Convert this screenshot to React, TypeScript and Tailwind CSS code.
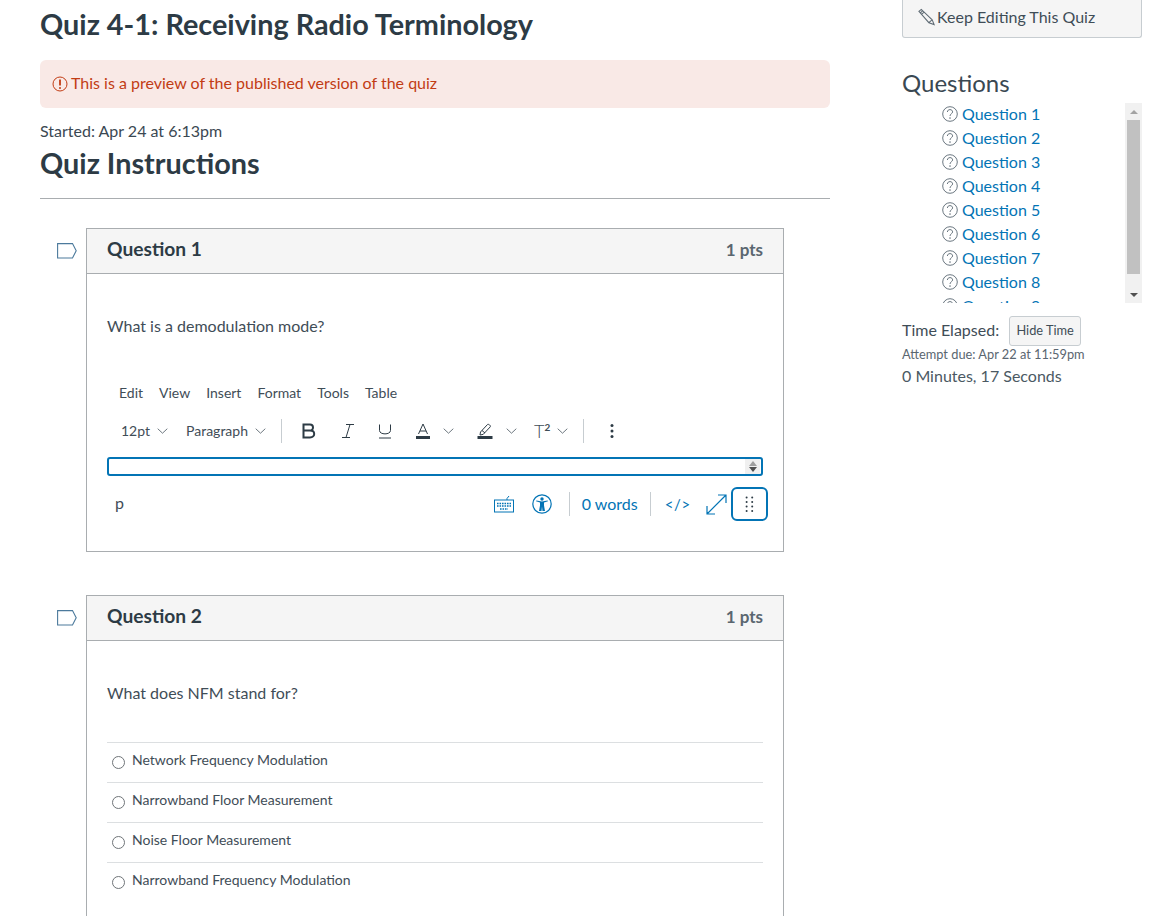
import React from "react";

const Chevron = ({ className = "" }: { className?: string }) => (
  <svg width="11" height="6" viewBox="0 0 11 6" fill="none" stroke="#5c6870" strokeWidth="0.9" className={className}>
    <path d="M0.7 0.7 L5.5 5.2 L10.3 0.7" />
  </svg>
);

const Flag = () => (
  <svg width="20" height="16" viewBox="0 0 20 16" fill="none" stroke="#4c7a9c" strokeWidth="1.1" className="shrink-0">
    <path d="M0.6 0.6 H15.5 L19.2 7.7 L15.5 15 H0.6 Z" />
  </svg>
);

const QMark = () => (
  <svg width="16" height="16" viewBox="0 0 16 16" fill="none" className="shrink-0">
    <circle cx="8" cy="8" r="7.3" stroke="#6b7780" strokeWidth="1" />
    <path d="M5.4 6 C5.4 4.4 6.6 3.6 8 3.6 C9.5 3.6 10.6 4.6 10.6 5.9 C10.6 7.6 8 7.9 8 10" stroke="#6b7780" strokeWidth="1" />
    <circle cx="8" cy="12.1" r="0.8" fill="#6b7780" />
  </svg>
);

const Card = ({ title, className = "", children }: { title: string; className?: string; children: React.ReactNode }) => (
  <div className={`flex items-start ${className}`}>
    <div className="w-[46px] shrink-0 pt-[15px] pl-[17px]">
      <Flag />
    </div>
    <div className="flex-1 border border-[#a9adb0] flex flex-col">
      <div className="h-[45px] shrink-0 bg-[#f5f5f5] border-b border-[#a9adb0] flex items-center justify-between pl-5 pr-5">
        <span className="text-[19.2px] font-bold text-[#2d3b45] pb-[4px]">{title}</span>
        <span className="text-[17px] font-bold text-[#5a6670] pb-[3px]">1 pts</span>
      </div>
      {children}
    </div>
  </div>
);

const Answer = ({ text }: { text: string }) => (
  <div className="h-[40px] border-t border-[#dcdfe1] flex items-center pl-[5px] gap-[7px]">
    <span className="w-[13px] h-[13px] rounded-full border border-[#6f7478] bg-white shrink-0" />
    <span className="text-[14px] text-[#3f4d57] pb-[6px]">{text}</span>
  </div>
);

export default function App() {
  const questions = [1, 2, 3, 4, 5, 6, 7, 8, 9];
  return (
    <div className="w-[1150px] h-[916px] overflow-hidden bg-white flex font-['Lato','Liberation_Sans',sans-serif] text-[#2d3b45]">
      <main className="w-[790px] ml-10 shrink-0">
        <h1 className="h-[48px] leading-[48px] text-[28.8px] font-bold whitespace-nowrap">
          Quiz 4-1: Receiving Radio Terminology
        </h1>
        <div className="mt-[12px] h-[48px] rounded-[6px] bg-[#f9e9e6] flex items-center pl-[12px] gap-[3px] text-[16px] text-[#c23c14]">
          <svg width="16" height="16" viewBox="0 0 16 16" fill="none" className="shrink-0">
            <circle cx="8" cy="8" r="7" stroke="#c23c14" strokeWidth="1" />
            <path d="M8 3.6 V9.6" stroke="#c23c14" strokeWidth="1.8" />
            <circle cx="8" cy="12" r="1" fill="#c23c14" />
          </svg>
          <span className="pb-[2px]">This is a preview of the published version of the quiz</span>
        </div>
        <div className="mt-[13px] h-[20px] leading-[20px] text-[16px] text-[#3b4852]">Started: Apr 24 at 6:13pm</div>
        <h2 className="mt-[2px] h-[40px] leading-[40px] text-[28.8px] font-bold">Quiz Instructions</h2>
        <div className="mt-[15px] h-px bg-[#a9adb0]" />

        <Card title="Question 1" className="mt-[29px] w-[744px]">
          <div className="h-[277px] flex flex-col px-5">
            <div className="mt-[42px] h-[20px] leading-[20px] text-[16px] text-[#3f4d57]">What is a demodulation mode?</div>
            <div className="mt-[46px] h-[20px] flex items-center gap-[16px] pl-3 text-[14px] text-[#3f4d57]">
              <span>Edit</span>
              <span>View</span>
              <span>Insert</span>
              <span>Format</span>
              <span>Tools</span>
              <span>Table</span>
            </div>
            <div className="mt-[17px] h-[24px] flex items-center pl-[14px] text-[14px] text-[#3f4d57]">
              <span className="pb-[2px]">12pt</span>
              <Chevron className="ml-[7px]" />
              <span className="ml-[18px] pb-[2px]">Paragraph</span>
              <Chevron className="ml-[7px]" />
              <span className="ml-[15px] w-px h-[24px] bg-[#c7cdd1]" />
              <svg width="16" height="16" viewBox="0 0 16 16" fill="none" stroke="#2d3b45" strokeWidth="2" className="ml-[19px]">
                <path d="M2.5 1.6 H9 C13 1.6 13 7.6 9 7.6 H2.5 M9 7.6 C14.6 7.6 14.6 14.4 9 14.4 H2.5 M2.5 0.6 V15.4" />
              </svg>
              <svg width="16" height="16" viewBox="0 0 16 16" fill="none" stroke="#2d3b45" strokeWidth="1" className="ml-[23px]">
                <path d="M6 1.5 H14 M2 14.5 H10 M10 1.5 L6 14.5" />
              </svg>
              <svg width="16" height="16" viewBox="0 0 16 16" fill="none" stroke="#2d3b45" strokeWidth="1" className="ml-[21px]">
                <path d="M2.5 1.5 V7.5 C2.5 12 13.5 12 13.5 7.5 V1.5 M2 15 H14" />
              </svg>
              <svg width="16" height="16" viewBox="0 0 16 16" fill="none" stroke="#2d3b45" strokeWidth="1" className="ml-[22px]">
                <path d="M3.5 11 L8 1 L12.5 11 M5 8 H11" />
                <rect x="1" y="13" width="14" height="3" fill="#2d3b45" stroke="none" />
              </svg>
              <Chevron className="ml-[12px]" />
              <svg width="16" height="16" viewBox="0 0 16 16" fill="none" stroke="#2d3b45" strokeWidth="1" className="ml-[23px]">
                <path d="M3.5 9 L10.5 1.5 C11.5 0.6 14.2 2.8 13.2 3.9 L6.2 11.4 L3 12 Z M5 7.5 L8 10" />
                <rect x="0.5" y="13" width="15" height="3" fill="#2d3b45" stroke="none" />
              </svg>
              <Chevron className="ml-[13px]" />
              <span className="ml-[17px] text-[18px] leading-none font-light">T</span>
              <span className="text-[10px] font-bold leading-none mb-[8px]">2</span>
              <Chevron className="ml-[7px]" />
              <span className="ml-[15px] w-px h-[24px] bg-[#c7cdd1]" />
              <svg width="4" height="16" viewBox="0 0 4 16" fill="#2d3b45" className="ml-[26px]">
                <circle cx="2" cy="2.5" r="1.5" />
                <circle cx="2" cy="8" r="1.5" />
                <circle cx="2" cy="13.5" r="1.5" />
              </svg>
            </div>
            <div className="mt-[14px] h-[19px] border-2 border-[#0374b5] rounded-[3px] flex justify-end items-center pr-[1px]">
              <div className="w-[15px] h-[15px] bg-[#f0f0f0] flex flex-col items-center justify-center gap-[1px]">
                <span className="w-0 h-0 border-x-[4px] border-x-transparent border-b-[5px] border-b-[#a0a0a0]" />
                <span className="w-0 h-0 border-x-[4px] border-x-transparent border-t-[5px] border-t-[#505050]" />
              </div>
            </div>
            <div className="mt-[11px] h-[34px] flex items-center text-[#0374b5] -mr-[5px]">
              <span className="pl-[8px] pb-[2px] text-[#3f4d57] text-[16px]">p</span>
              <svg width="20" height="20" viewBox="0 0 20 20" fill="none" stroke="#0374b5" strokeWidth="1" className="ml-auto">
                <rect x="0.5" y="6" width="19" height="12" />
                <path d="M13 6 V4.5 L15 2" />
                <path d="M3 9.5 H17 M3 12 H17 M6 15 H14" strokeWidth="1.7" strokeDasharray="1.6 0.9" />
              </svg>
              <svg width="20" height="20" viewBox="0 0 20 20" fill="none" className="ml-[18px]">
                <circle cx="10" cy="10" r="9.2" stroke="#0374b5" strokeWidth="1.2" />
                <circle cx="10" cy="5" r="1.7" fill="#0374b5" />
                <path d="M4 7.3 L8 8.6 V11.5 L7 17 H9.5 L10 12.5 L10.5 17 H13 L12 11.5 V8.6 L16 7.3 L15.6 6.4 L10 7.6 L4.4 6.4 Z" fill="#0374b5" />
              </svg>
              <span className="ml-[17px] w-px h-[24px] bg-[#c7cdd1]" />
              <span className="ml-[12px] text-[16px] whitespace-nowrap">0 words</span>
              <span className="ml-[12px] w-px h-[24px] bg-[#c7cdd1]" />
              <span className="ml-[14px] text-[15px] tracking-[0.7px] whitespace-nowrap">&lt;/&gt;</span>
              <svg width="21" height="21" viewBox="0 0 21 21" fill="none" stroke="#0374b5" strokeWidth="1.2" className="ml-[15px]">
                <path d="M1 20 L20 1 M12 1 H20 V9 M1 12 V20 H9" />
              </svg>
              <div className="ml-[4px] w-[37px] h-[34px] border-2 border-[#0374b5] rounded-[6px] flex items-center justify-center">
                <svg width="9" height="16" viewBox="0 0 9 16" fill="#2d3b45">
                  {[1.5, 6, 10.5, 15].map((y) => (
                    <React.Fragment key={y}>
                      <circle cx="1.6" cy={y} r="1" />
                      <circle cx="7.2" cy={y} r="1" />
                    </React.Fragment>
                  ))}
                </svg>
              </div>
            </div>
          </div>
        </Card>

        <Card title="Question 2" className="mt-[43px] w-[744px]">
          <div className="flex flex-col px-5 h-[300px]">
            <div className="mt-[42px] h-[20px] leading-[20px] text-[16px] text-[#3f4d57]">What does NFM stand for?</div>
            <div className="mt-[39px] flex flex-col">
              <Answer text="Network Frequency Modulation" />
              <Answer text="Narrowband Floor Measurement" />
              <Answer text="Noise Floor Measurement" />
              <Answer text="Narrowband Frequency Modulation" />
            </div>
          </div>
        </Card>
      </main>

      <aside className="ml-[72px] w-[240px] shrink-0 flex flex-col">
        <div className="h-[38px] shrink-0 bg-[#f5f5f5] border border-t-0 border-[#c7cdd1] rounded-b-[3px] flex items-center pl-[14px] pb-[3px] gap-[1px] text-[16px] text-[#3f4d57]">
          <svg width="19" height="18" viewBox="0 0 20 18" fill="none" stroke="#5f6b74" strokeWidth="1.1" className="shrink-0">
            <path d="M2 3 L4.5 1 L16 12 L18 17 L12.5 15 Z M3.5 4.5 L6 2.5 M5 6 L7.5 3.8 M12.5 15 L15.5 12.3" />
          </svg>
          <span>Keep Editing This Quiz</span>
        </div>
        <h2 className="mt-[28px] h-[34px] shrink-0 leading-[34px] text-[24px] font-normal text-[#3a4852]">Questions</h2>
        <div className="mt-[3px] h-[200px] shrink-0 flex">
          <ul className="flex-1 h-[200px] overflow-hidden pl-[40px]">
            {questions.map((n) => (
              <li key={n} className="h-[24px] flex items-center gap-[4px] text-[16px] text-[#0374b5] -translate-y-px">
                <QMark />
                <span>Question {n}</span>
              </li>
            ))}
          </ul>
          <div className="w-[17px] bg-[#f1f1f1] flex flex-col items-center">
            <div className="h-[17px] flex items-center">
              <span className="w-0 h-0 border-x-[4px] border-x-transparent border-b-[4px] border-b-[#a3a3a3]" />
            </div>
            <div className="w-[13px] h-[154px] bg-[#c1c1c1]" />
            <div className="flex-1 flex items-end pb-[6px]">
              <span className="w-0 h-0 border-x-[4px] border-x-transparent border-t-[4px] border-t-[#505050]" />
            </div>
          </div>
        </div>
        <div className="mt-[13px] h-[30px] shrink-0 flex items-center text-[16px] text-[#3f4d57]">
          <span className="pb-[2px]">Time Elapsed:</span>
          <span className="ml-[10px] w-[72px] h-[30px] bg-[#f5f5f5] border border-[#c7cdd1] rounded-[3px] flex items-center justify-center text-[12.8px]">Hide Time</span>
        </div>
        <div className="h-[17px] shrink-0 leading-[17px] text-[12.8px] text-[#5a6670]">Attempt due: Apr 22 at 11:59pm</div>
        <div className="mt-[2px] h-[22px] shrink-0 leading-[22px] text-[16px] text-[#4b5963]">0 Minutes, 17 Seconds</div>
      </aside>
    </div>
  );
}
